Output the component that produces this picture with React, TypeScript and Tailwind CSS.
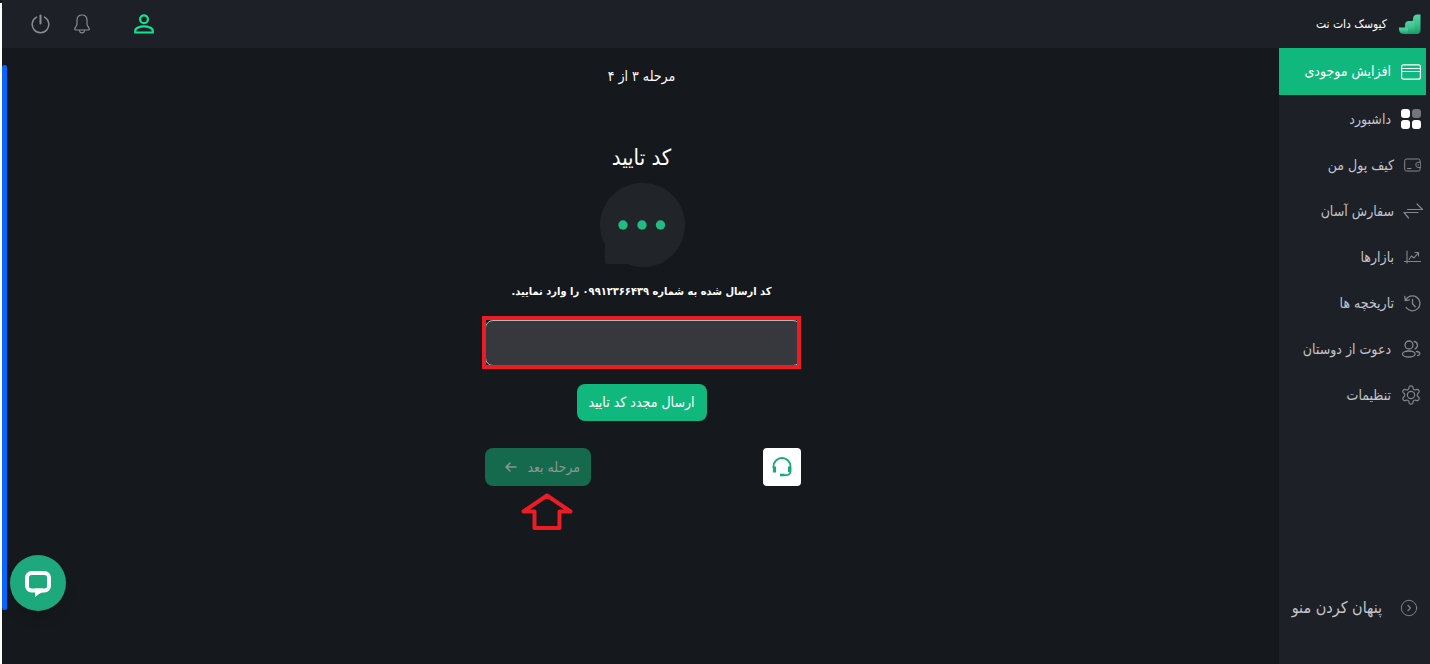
import { useState } from "react"
import type { ReactNode } from "react"

const stroke = {
  fill: "none",
  stroke: "currentColor",
  strokeLinecap: "round",
  strokeLinejoin: "round",
} as const

const LogoIcon = () => (
  <svg width="24" height="22" viewBox="0 0 24 22" aria-hidden="true">
    <defs>
      <linearGradient id="bar" x1="0" y1="0" x2="0" y2="1">
        <stop offset="0" stopColor="#4fd3a0" />
        <stop offset=".5" stopColor="#3cc08c" />
        <stop offset="1" stopColor="#149a68" />
      </linearGradient>
    </defs>
    <path d="M15 6Q15 1.500 19.500 1.500h3V17q0 4-4 4H13z" fill="url(#bar)" />
    <path d="M7 12q0-4 4-4h5.500v9q0 4-4 4H7z" fill="url(#bar)" />
    <path d="M1 14.500h9V21H6q-5 0-5-5z" fill="url(#bar)" />
  </svg>
)

const CardIcon = () => (
  <svg width="20" height="16" viewBox="0 0 20 16" {...stroke} strokeWidth="1.200" aria-hidden="true">
    <rect x=".6" y=".8" width="18.800" height="14.400" rx="2" />
    <path d="M1 4.500h18M1 7.500h18" />
  </svg>
)

const GridIcon = () => (
  <svg width="20" height="20" viewBox="0 0 20 20" fill="#fff" aria-hidden="true">
    <rect x="0" y="0" width="9" height="9" rx="3" />
    <rect x="11" y="0" width="9" height="9" rx="3" fill="#717479" />
    <rect x="0" y="11" width="9" height="9" rx="3" />
    <rect x="11" y="11" width="9" height="9" rx="3" />
  </svg>
)

const WalletIcon = () => (
  <svg width="17" height="14" viewBox="0 0 17 14" {...stroke} strokeWidth="1" aria-hidden="true">
    <path d="M16 4V2.500Q16 1 14.500 1H2.500Q.7 1 .7 2.800v8.500Q.7 13 2.500 13h12q1.500 0 1.500-1.500V10" />
    <path d="M16.300 4.300h-2.500q-2 .3-2 2.500t2 2.700h2.500zM14 7h.6M3.500 10.500H7" />
  </svg>
)

const SwapIcon = () => (
  <svg width="17" height="16" viewBox="0 0 17 16" {...stroke} strokeWidth="1.200" className="overflow-visible" aria-hidden="true">
    <path d="M3.500 6.500h15L13 1M14 9.500H0L4.500 15" />
  </svg>
)

const ChartIcon = () => (
  <svg width="17" height="14" viewBox="0 0 17 14" {...stroke} strokeWidth="1.100" aria-hidden="true">
    <path d="M3 1v12M.5 11.500h16M5 9.500l2.500-3.500 2.500 2 4-5M11 2.500h3.500V6" />
  </svg>
)

const HistoryIcon = () => (
  <svg width="17" height="17" viewBox="0 0 17 17" {...stroke} strokeWidth="1.300" aria-hidden="true">
    <path d="M1.500 5.500A7.500 7.500 0 1 1 2.200 12.500M.8 1.500l.5 4.200 4.200-.9M8.500 4.500v4.300l2.700 3" />
  </svg>
)

const FriendsIcon = () => (
  <svg width="20" height="18" viewBox="0 0 20 18" {...stroke} strokeWidth="1.300" aria-hidden="true">
    <circle cx="8" cy="5" r="4" />
    <ellipse cx="7.800" cy="14" rx="6.300" ry="3" />
    <path d="M13.200 1.500a3.800 3.800 0 0 1 .8 7.300M15.500 11.500c2.300.3 3.300 1 3.300 2.200 0 .9-.8 1.500-2.300 1.900" />
  </svg>
)

const GearIcon = () => (
  <svg width="20" height="20" viewBox="1 1 22 22" {...stroke} strokeWidth="1.300" aria-hidden="true">
    <path d="M12.220 2h-.44a2 2 0 0 0-2 2v.18a2 2 0 0 1-1 1.730l-.43.25a2 2 0 0 1-2 0l-.15-.08a2 2 0 0 0-2.730.73l-.22.38a2 2 0 0 0 .73 2.730l.15.1a2 2 0 0 1 1 1.720v.51a2 2 0 0 1-1 1.740l-.15.09a2 2 0 0 0-.73 2.730l.22.38a2 2 0 0 0 2.730.73l.15-.08a2 2 0 0 1 2 0l.43.25a2 2 0 0 1 1 1.730V20a2 2 0 0 0 2 2h.44a2 2 0 0 0 2-2v-.18a2 2 0 0 1 1-1.730l.43-.25a2 2 0 0 1 2 0l.15.08a2 2 0 0 0 2.730-.73l.22-.39a2 2 0 0 0-.73-2.730l-.15-.08a2 2 0 0 1-1-1.740v-.5a2 2 0 0 1 1-1.740l.15-.09a2 2 0 0 0 .73-2.730l-.22-.38a2 2 0 0 0-2.730-.73l-.15.08a2 2 0 0 1-2 0l-.43-.25a2 2 0 0 1-1-1.730V4a2 2 0 0 0-2-2z" />
    <circle cx="12" cy="12" r="4" />
  </svg>
)

const UserIcon = () => (
  <svg width="20" height="20" viewBox="0 0 20 20" fill="none" stroke="#12e391" strokeWidth="2.200" aria-hidden="true">
    <circle cx="10" cy="5.300" r="3.900" />
    <path d="M1.300 18.500v-2c0-2.500 4.700-4.200 8.700-4.200s8.700 1.700 8.700 4.200v2z" />
  </svg>
)

const BellIcon = () => (
  <svg width="16" height="20" viewBox="0 0 16 20" {...stroke} strokeWidth="1.200" aria-hidden="true">
    <path d="M8 1C4.500 1 3 3.500 3 6.200v3.500c0 2.800-2.300 3.600-2.300 5.300 0 .8.500 1 1.500 1h11.600c1 0 1.500-.2 1.500-1 0-1.700-2.300-2.500-2.300-5.300V6.200C13 3.500 11.500 1 8 1z" />
    <path d="M5.500 16.500c.2 1.600 1.300 2.400 2.500 2.400s2.300-.8 2.500-2.400" />
  </svg>
)

const PowerIcon = () => (
  <svg width="19" height="20" viewBox="0 0 19 20" {...stroke} strokeWidth="1.500" aria-hidden="true">
    <path d="M5.500 3.100a8.300 8.300 0 1 0 8 0" />
    <path d="M9.500 1.500v8" strokeWidth="2" />
  </svg>
)

const HeadsetIcon = () => (
  <svg width="20" height="20" viewBox="0 0 20 20" fill="none" stroke="#1aa77b" strokeWidth="1.800" aria-hidden="true">
    <path d="M1.500 11V9.500a8.500 8.500 0 0 1 17 0V14q0 3.800-4 4.200H9" />
    <path d="M2.500 9.500v6M17.500 9.500v5.500" strokeWidth="3.200" />
    <path d="M8 18h4.500" strokeWidth="2.600" />
  </svg>
)

type MenuItem = { label: string; icon: ReactNode; active?: boolean }

const menu: MenuItem[] = [
  { label: "افزایش موجودی", icon: <CardIcon />, active: true },
  { label: "داشبورد", icon: <GridIcon /> },
  { label: "کیف پول من", icon: <WalletIcon /> },
  { label: "سفارش آسان", icon: <SwapIcon /> },
  { label: "بازارها", icon: <ChartIcon /> },
  { label: "تاریخچه ها", icon: <HistoryIcon /> },
  { label: "دعوت از دوستان", icon: <FriendsIcon /> },
  { label: "تنظیمات", icon: <GearIcon /> },
]

const Sidebar = () => (
  <aside className="flex w-[151px] shrink-0 flex-col bg-[#1e2028]">
    <div className="flex h-12 items-center gap-[11px] pr-2 text-white">
      <LogoIcon />
      <span className="text-[12px] whitespace-nowrap">کیوسک دات نت</span>
    </div>
    <nav className="mr-1 flex flex-col">
      {menu.map((item) => (
        <a
          key={item.label}
          href="#"
          className={
            item.active
              ? "mb-px flex h-[47px] items-center gap-[10px] bg-[#11b87d] pr-[5px] text-[14px] whitespace-nowrap text-white"
              : "flex h-[46px] items-center gap-[10px] pr-[5px] text-[14px] whitespace-nowrap text-[#c4c6ca]"
          }
        >
          <span className={item.active ? "text-white" : "text-[#85878b]"}>{item.icon}</span>
          {item.label}
        </a>
      ))}
    </nav>
    <button type="button" className="mt-auto mb-10 flex h-8 items-center gap-[18px] pr-3 text-[16px] whitespace-nowrap text-[#c4c6ca]">
      <svg width="18" height="18" viewBox="0 0 18 18" {...stroke} className="text-[#7d7f84]" aria-hidden="true">
        <circle cx="9" cy="9" r="7.700" />
        <path d="M8 6.500 10.500 9 8 11.500" strokeWidth="1.300" />
      </svg>
      پنهان کردن منو
    </button>
  </aside>
)

const Header = () => (
  <header className="flex h-12 items-center justify-end bg-[#1e2028] pl-[29px] text-[#8a8c90]">
    <button type="button" aria-label="حساب کاربری" className="ml-[44px]">
      <UserIcon />
    </button>
    <button type="button" aria-label="اعلان‌ها" className="ml-6">
      <BellIcon />
    </button>
    <button type="button" aria-label="خروج">
      <PowerIcon />
    </button>
  </header>
)

const VerifyStep = () => {
  const [code, setCode] = useState("")

  return (
    <main className="flex flex-1 flex-col items-center pr-[3px] text-white">
      <p className="mt-[18px] text-[14px] leading-5">مرحله ۳ از ۴</p>

      <form onSubmit={(e) => e.preventDefault()} className="mt-[60px] flex w-[319px] flex-col items-center">
        <h1 className="text-[22px] leading-6">کد تایید</h1>

        <svg width="86" height="86" viewBox="0 0 86 86" className="mt-3" aria-hidden="true">
          <path d="M43 1a42 42 0 1 1-14.500 81H8q-2 0-2-2V63A42 42 0 0 1 43 1z" fill="#212429" />
          <g fill="#22bb82">
            <circle cx="24" cy="43" r="4.700" />
            <circle cx="43" cy="43" r="4.700" />
            <circle cx="61.500" cy="43" r="4.700" />
          </g>
        </svg>

        <label htmlFor="code" className="mt-3 text-[11px] leading-6 font-bold whitespace-nowrap">
          کد ارسال شده به شماره ۰۹۹۱۲۳۶۶۴۳۹ را وارد نمایید.
        </label>

        <div className="relative mt-3 w-full pt-1 pb-[3px] pl-[3px]">
          <input
            id="code"
            type="text"
            inputMode="numeric"
            dir="ltr"
            value={code}
            onChange={(e) => setCode(e.target.value)}
            className="block h-[46px] w-full rounded-lg border border-[#b4b5b7] bg-[#37383d] px-3 text-center text-base outline-none"
          />
          <div className="pointer-events-none absolute inset-0 border-4 border-[#ec1c24]" />
        </div>

        <button type="button" className="mt-[15px] h-[37px] w-[130px] rounded-lg bg-[#11b87d] text-[14px] whitespace-nowrap">
          ارسال مجدد کد تایید
        </button>

        <div className="mt-[27px] flex w-full justify-between pl-[3px]">
          <button type="button" aria-label="پشتیبانی" className="flex size-[38px] items-center justify-center rounded bg-white">
            <HeadsetIcon />
          </button>
          <div className="flex w-[106px] flex-col">
            <button
              type="submit"
              disabled={!code}
              className="flex h-[38px] items-center gap-[10px] rounded-lg bg-[#156a4e] pr-[11px] text-[14px] whitespace-nowrap text-[#8b9793]"
            >
              مرحله بعد
              <svg width="12" height="12" viewBox="0 0 12 12" {...stroke} strokeWidth="1.500" aria-hidden="true">
                <path d="M11 6H1M5 2 1 6l4 4" />
              </svg>
            </button>
            <svg width="54" height="38" viewBox="0 0 54 38" className="mt-[7px] mr-[17px]" aria-hidden="true">
              <path d="M27 2.500 50.500 18.500H39.500V35h-25V18.500H3.500z" fill="none" stroke="#ec1c24" strokeWidth="4" strokeLinejoin="round" />
            </svg>
          </div>
        </div>
      </form>
    </main>
  )
}

export default function App() {
  return (
    <div dir="rtl" className="flex min-h-screen bg-[#15181c] font-['DejaVu_Sans_Condensed','DejaVu_Sans',sans-serif]">
      <Sidebar />
      <div className="flex flex-1 flex-col">
        <Header />
        <div className="flex flex-1">
          <VerifyStep />
          <div className="mt-[17px] mb-[54px] w-[5px] rounded-sm bg-[#0866ff]" />
        </div>
      </div>
      <div className="mt-[3px] w-[2px] bg-white" />

      <button
        type="button"
        aria-label="گفتگوی آنلاین"
        className="fixed bottom-[53px] left-[10px] flex size-14 items-center justify-center rounded-full bg-[#1ea97c] shadow-lg"
      >
        <svg width="28" height="28" viewBox="0 0 28 28" aria-hidden="true">
          <rect x="3" y="4" width="22" height="17.500" rx="4.500" fill="none" stroke="#fff" strokeWidth="4" />
          <path d="M11 28v-8.500h8V23q-4 1.500-8 5z" fill="#fff" />
        </svg>
      </button>
    </div>
  )
}
